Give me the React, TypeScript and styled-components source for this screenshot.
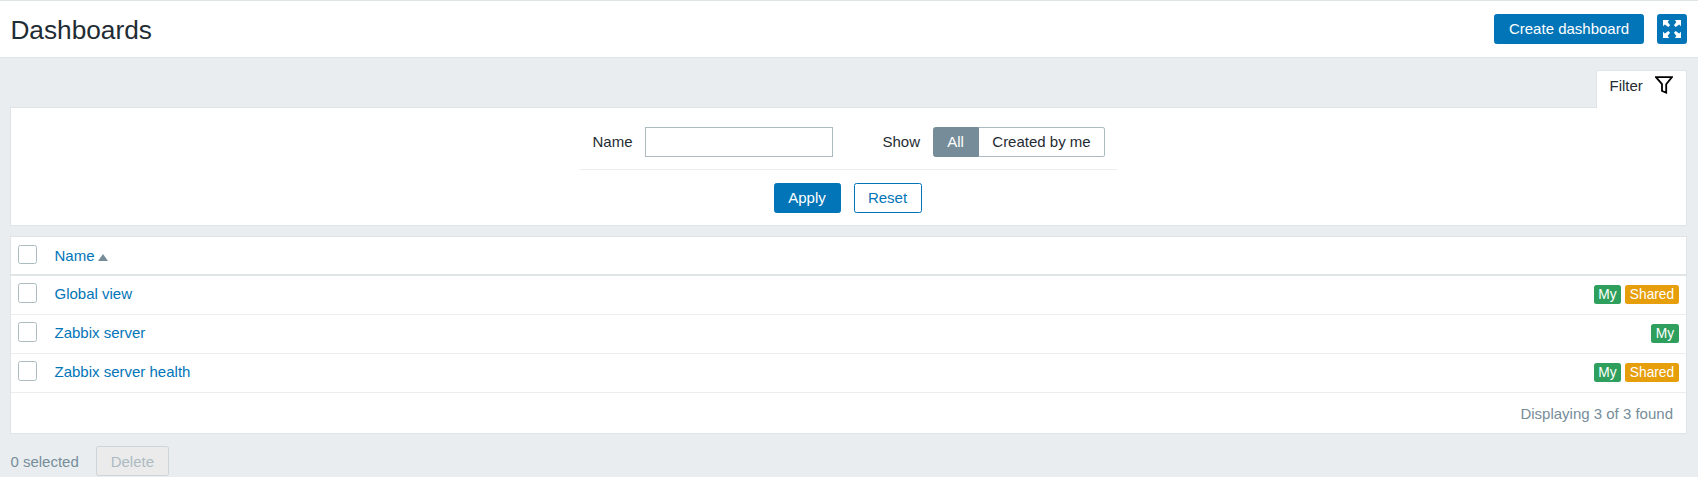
import React from "react";
import styled, { createGlobalStyle, css } from "styled-components";

const Global = createGlobalStyle`
  * { box-sizing: border-box; }
  body {
    margin: 0;
    background: #e9edf0;
    color: #1f2c33;
    font: 15px/18px "Liberation Sans", Arial, sans-serif;
    overflow: hidden;
  }
  button, input { font: inherit; margin: 0; }
`;

const Header = styled.header`
  display: flex;
  align-items: flex-start;
  justify-content: space-between;
  height: 58px;
  padding: 13px 11px 0 10.4px;
  background: #fff;
  border-top: 1px solid #dfe4e7;
  border-bottom: 1px solid #dfe4e7;
`;

const Title = styled.h1`
  margin: 0;
  font-size: 26.25px;
  line-height: 32px;
  font-weight: 400;
`;

const HeaderActions = styled.div`
  display: flex;
  gap: 13px;
`;

type Variant = "primary" | "outline" | "disabled";

const Button = styled.button<{ $variant?: Variant; $width: number }>`
  display: flex;
  align-items: center;
  justify-content: center;
  width: ${(p) => p.$width}px;
  height: 30px;
  padding: 0 0 1px;
  border: 1px solid #0275b8;
  border-radius: 2.5px;
  background: #0275b8;
  color: #fff;
  white-space: nowrap;
  ${(p) => p.$variant === "outline" && css`
    background: #fff;
    color: #0275b8;
  `}
  ${(p) => p.$variant === "disabled" && css`
    padding: 1px 0 0;
    background: #ebebeb;
    border-color: #ccd5d9;
    color: #acbbc2;
  `}
`;

const IconButton = styled(Button)`
  padding: 0;
`;

const Main = styled.main`
  padding: 12px 11px 0 10px;
`;

const TabBar = styled.div`
  display: flex;
  justify-content: flex-end;
`;

const FilterTab = styled.div`
  display: flex;
  align-items: flex-start;
  gap: 12px;
  width: 91px;
  height: 38px;
  margin-bottom: -1px;
  padding: 6px 0 0 12.5px;
  position: relative;
  background: #fff;
  border: 1px solid #dfe4e7;
  border-bottom: 0;
  border-radius: 2.5px 2.5px 0 0;
  svg { margin-top: -1px; }
`;

const FilterPanel = styled.section`
  display: flex;
  flex-direction: column;
  align-items: center;
  height: 119px;
  padding-top: 19px;
  background: #fff;
  border: 1px solid #dfe4e7;
`;

const FilterFields = styled.div`
  display: flex;
  width: 537px;
  height: 43px;
  padding-left: 12.5px;
  border-bottom: 1px solid #ebeef0;
`;

const Field = styled.div<{ $labelWidth: number }>`
  display: grid;
  grid-template-columns: ${(p) => p.$labelWidth}px auto;
  height: 30px;
  line-height: 29px;
  & + & { margin-left: 49.5px; }
`;

const TextInput = styled.input`
  width: 188px;
  height: 30px;
  padding: 0 5px;
  border: 1px solid #acbbc2;
  border-radius: 0;
  outline: 0;
`;

const Segments = styled.div`
  display: flex;
`;

const Segment = styled.label<{ $active?: boolean; $width: number }>`
  width: ${(p) => p.$width}px;
  height: 30px;
  line-height: 27px;
  text-align: center;
  border: 1px solid ${(p) => (p.$active ? "#768d99" : "#acbbc2")};
  background: ${(p) => (p.$active ? "#768d99" : "#fff")};
  color: ${(p) => (p.$active ? "#fff" : "inherit")};
  &:first-child { border-radius: 2.5px 0 0 2.5px; padding-right: 1px; }
  &:last-child { border-left: 0; border-radius: 0 2.5px 2.5px 0; }
`;

const FilterActions = styled.div`
  display: flex;
  gap: 13px;
  margin: 13px 2px 0 0;
`;

const List = styled.section`
  margin-top: 10px;
  background: #fff;
  border: 1px solid #dfe4e7;
`;

const Row = styled.div<{ $head?: boolean }>`
  display: flex;
  align-items: flex-start;
  height: 39px;
  padding: ${(p) => (p.$head ? 8 : 7)}px 7px 0;
  border-bottom: ${(p) => (p.$head ? "2px solid #dfe4e7" : "1px solid #ebeef0")};
`;

const Checkbox = styled.span<{ $head?: boolean }>`
  width: 19px;
  height: ${(p) => (p.$head ? 19 : 20)}px;
  margin-right: 17.5px;
  border: 1px solid #acbbc2;
  border-radius: 2.5px;
  background: #fff;
`;

const Link = styled.a`
  display: flex;
  align-items: center;
  gap: 3.5px;
  margin-top: 2px;
  color: #0275b8;
  text-decoration: none;
  svg { margin-top: 2px; }
`;

const Badges = styled.div`
  display: flex;
  gap: 4px;
  margin: 2px 0 0 auto;
`;

const Badge = styled.span<{ $shared?: boolean }>`
  width: ${(p) => (p.$shared ? 54 : 27)}px;
  height: 19px;
  line-height: 19px;
  font-size: 13.75px;
  text-align: center;
  border-radius: 2.5px;
  color: #fff;
  background: ${(p) => (p.$shared ? "#e79e0b" : "#2f9f5e")};
  &:only-child { width: 28px; }
`;

const ListFooter = styled.div`
  height: 40px;
  padding: 12px 13px 0 0;
  color: #768d99;
  text-align: right;
`;

const Selection = styled.footer`
  display: flex;
  gap: 17.1px;
  margin-top: 12px;
  padding-left: 0.4px;
  line-height: 32px;
  color: #768d99;
`;

const ExpandIcon = () => (
  <svg width="18" height="18" viewBox="0 0 18 18" fill="#fff">
    {[0, 90, 180, 270].map((angle) => (
      <path key={angle} transform={`rotate(${angle} 9 9)`} d="M0 0h6.2L4.6 1.9 7.1 5.3 5.3 7.1 1.9 4.6 0 6.2z" />
    ))}
  </svg>
);

const FunnelIcon = () => (
  <svg width="18" height="18" viewBox="0 0 18 18" fill="none" stroke="#000" strokeWidth="1.8">
    <path d="M1 1.2h15.8L11.2 8.2V16.6L7 15V8.2z" />
  </svg>
);

const SortArrow = () => (
  <svg width="10" height="7" viewBox="0 0 10 7" fill="#768d99">
    <path d="M5 0l5 7H0z" />
  </svg>
);

const dashboards = [
  { name: "Global view", shared: true },
  { name: "Zabbix server", shared: false },
  { name: "Zabbix server health", shared: true },
];

export default function App() {
  return (
    <>
      <Global />
      <Header>
        <Title>Dashboards</Title>
        <HeaderActions>
          <Button $width={150}>Create dashboard</Button>
          <IconButton $width={30} aria-label="Kiosk mode"><ExpandIcon /></IconButton>
        </HeaderActions>
      </Header>
      <Main>
        <TabBar>
          <FilterTab>Filter <FunnelIcon /></FilterTab>
        </TabBar>
        <FilterPanel>
          <FilterFields>
            <Field $labelWidth={52.5}>
              <span>Name</span>
              <TextInput aria-label="Name" />
            </Field>
            <Field $labelWidth={50.5}>
              <span>Show</span>
              <Segments>
                <Segment $active $width={46}>All</Segment>
                <Segment $width={126}>Created by me</Segment>
              </Segments>
            </Field>
          </FilterFields>
          <FilterActions>
            <Button $width={67}>Apply</Button>
            <Button $variant="outline" $width={68}>Reset</Button>
          </FilterActions>
        </FilterPanel>
        <List>
          <Row $head>
            <Checkbox $head />
            <Link>Name <SortArrow /></Link>
          </Row>
          {dashboards.map((d) => (
            <Row key={d.name}>
              <Checkbox />
              <Link>{d.name}</Link>
              <Badges>
                <Badge>My</Badge>
                {d.shared && <Badge $shared>Shared</Badge>}
              </Badges>
            </Row>
          ))}
          <ListFooter>Displaying 3 of 3 found</ListFooter>
        </List>
        <Selection>
          <span>0 selected</span>
          <Button $variant="disabled" $width={73} disabled>Delete</Button>
        </Selection>
      </Main>
    </>
  );
}
